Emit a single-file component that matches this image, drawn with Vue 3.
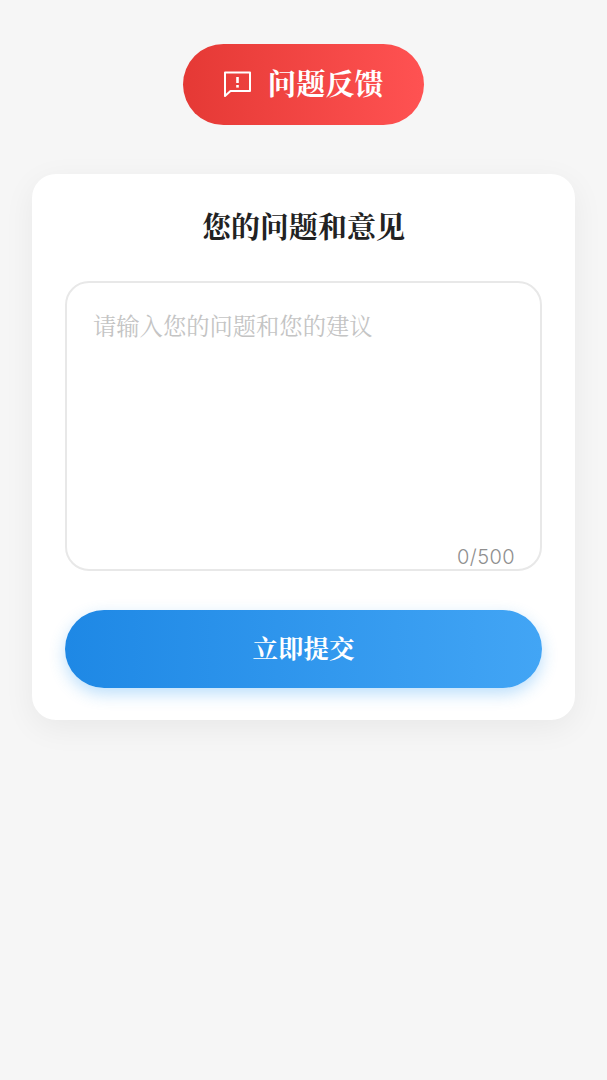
<script setup>
import { ref } from 'vue'

const content = ref('')
const maxLength = 500
</script>

<template>
  <div class="page">
    <div class="badge">
      <svg class="badge-icon" viewBox="0 0 28 28" fill="none" stroke="#fff" stroke-width="2">
        <path d="M2 2.5H27V21H7.5L2 26Z" stroke-linejoin="round" />
        <path d="M14.5 7V13" stroke-width="2.6" />
        <path d="M14.5 15V17.6" stroke-width="2.6" />
      </svg>
      <span class="badge-text">问题反馈</span>
    </div>

    <div class="card">
      <h2 class="card-title">您的问题和意见</h2>
      <div class="input-wrap">
        <textarea
          v-model="content"
          class="input"
          :maxlength="maxLength"
          placeholder="请输入您的问题和您的建议"
        ></textarea>
        <span class="count">{{ content.length }}/{{ maxLength }}</span>
      </div>
      <button class="submit">立即提交</button>
    </div>
  </div>
</template>

<style>
html,
body {
  margin: 0;
  background: #f6f6f6;
}
</style>

<style scoped>
.page {
  min-height: 1080px;
  box-sizing: border-box;
  padding: 44px 32px 0;
  background: #f6f6f6;
  display: flex;
  flex-direction: column;
  align-items: center;
  font-family: "Noto Serif CJK SC", "Source Han Serif SC", "Liberation Serif", "Noto Sans CJK SC", serif;
}

.badge {
  width: 241px;
  height: 81px;
  border-radius: 41px;
  background: linear-gradient(90deg, #e53935, #ff5252);
  display: flex;
  align-items: center;
  justify-content: center;
  gap: 16px;
  color: #fff;
}

.badge-icon {
  width: 28px;
  height: 28px;
  margin-bottom: 1px;
}

.badge-text {
  font-size: 29px;
  font-weight: 700;
  line-height: 1;
  margin-bottom: 5px;
}

.card {
  width: 100%;
  margin-top: 49px;
  box-sizing: border-box;
  height: 546px;
  padding: 32px 33px 0;
  background: #fff;
  border-radius: 24px;
  box-shadow: 0 8px 32px rgba(0, 0, 0, 0.06);
}

.card-title {
  margin: 0 0 36px;
  height: 39px;
  line-height: 39px;
  text-align: center;
  font-size: 29px;
  font-weight: 700;
  color: #222;
}

.input-wrap {
  position: relative;
  height: 290px;
}

.input {
  display: block;
  width: 100%;
  height: 100%;
  box-sizing: border-box;
  padding: 26px 26px;
  border: 2px solid #e8e8e8;
  border-radius: 24px;
  outline: none;
  resize: none;
  background: #fff;
  font-family: inherit;
  font-size: 23.3px;
  line-height: 32px;
  color: #333;
}

.input::placeholder {
  color: #c4c4c4;
  opacity: 1;
}

.count {
  position: absolute;
  right: 27px;
  bottom: 2px;
  font-family: Inter, "Liberation Sans", sans-serif;
  font-size: 20px;
  font-weight: 300;
  letter-spacing: 0.4px;
  line-height: 24px;
  color: #8f8f8f;
}

.submit {
  display: block;
  width: 100%;
  height: 78px;
  margin-top: 39px;
  padding: 0 0 4px;
  border: none;
  border-radius: 39px;
  background: linear-gradient(90deg, #1e88e5, #42a5f5);
  box-shadow: 0 6px 16px rgba(33, 150, 243, 0.3);
  color: #fff;
  font-family: inherit;
  font-size: 25.5px;
  font-weight: 700;
  cursor: pointer;
}
</style>
